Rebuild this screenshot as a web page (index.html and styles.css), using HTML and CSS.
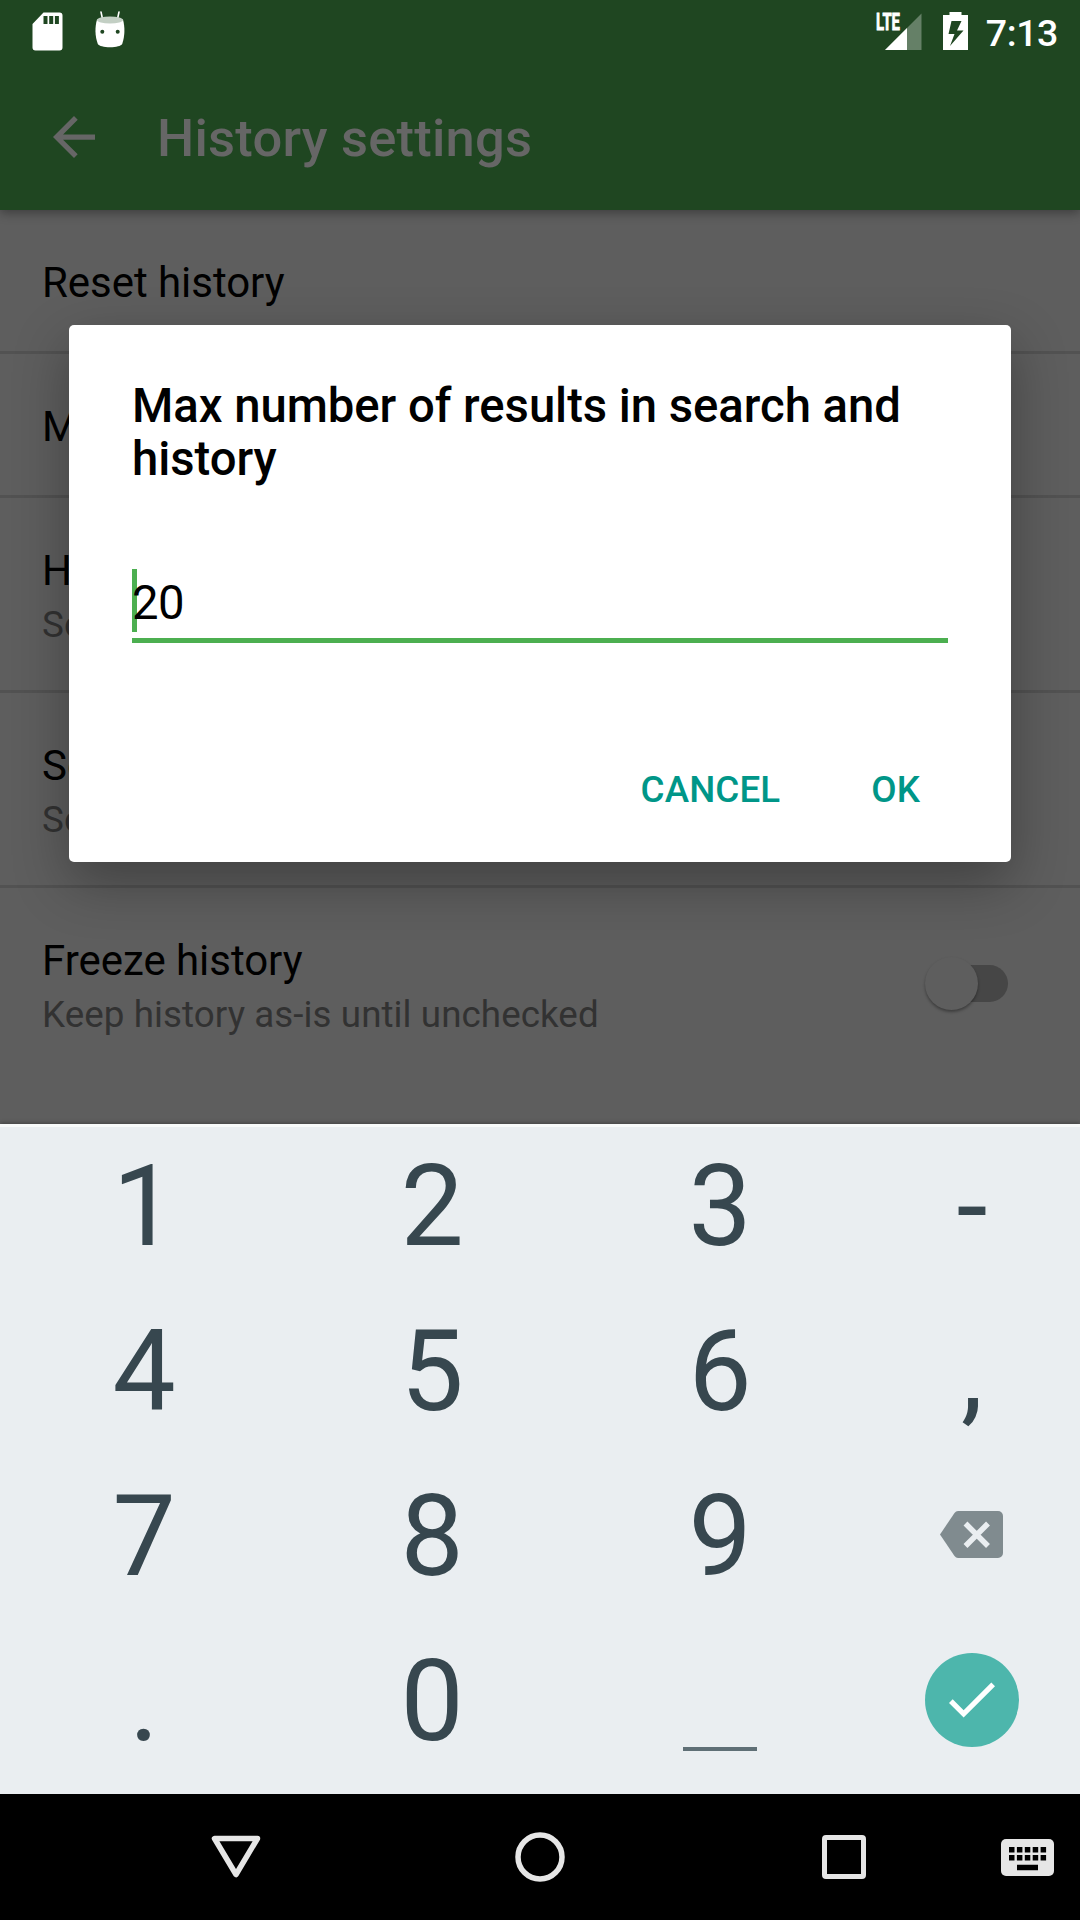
FILE: index.html
```html
<!DOCTYPE html>
<html lang="en">
<head>
<meta charset="utf-8">
<title>History settings</title>
<link rel="stylesheet" href="styles.css">
</head>
<body>
<div class="screen">
  <header class="top">
    <div class="status">
      <svg class="sd" width="31" height="39" viewBox="0 0 31 39"><path fill="#fff" fill-rule="evenodd" d="M11.500 .5H27.500a3 3 0 0 1 3 3v32a3 3 0 0 1-3 3h-24a3 3 0 0 1-3-3V12zM11.500 4v8h4v-8zM17.200 4v8h4v-8zM22.900 4v8h4v-8z"/></svg>
      <svg class="droid" width="32" height="37" viewBox="0 0 32 37"><path stroke="#fff" stroke-width="1.600" stroke-linecap="round" d="M7 1l1.500 7M25 1l-1.500 7"/><path fill="#fff" d="M3 8.500h26c2 8 2 16-.8 24.500-1.200 2-6 3.200-12.200 3.200S5 35 3.800 33C.8 24.500.8 16.500 3 8.500z"/><ellipse cx="16" cy="9" rx="13" ry="3.500" fill="#c3cfc4"/><circle cx="8.300" cy="20.700" r="2" fill="#1f4621"/><circle cx="23.700" cy="20.700" r="2" fill="#1f4621"/></svg>
      <svg class="signal" width="46" height="38" viewBox="0 0 46 38"><path fill="#658067" d="M45.500 .5v36.500H9z"/><path fill="#fff" d="M31 15v22H9z"/><text class="lte" x="0" y="16.500" textLength="24" lengthAdjust="spacingAndGlyphs">LTE</text></svg>
      <svg class="battery" width="25" height="38" viewBox="0 0 25 38"><path fill="#fff" fill-rule="evenodd" d="M6.500 0h12v3H25v35H0V3h6.500zM8.500 9L5.500 22h6L7 34 20.500 18.500H14L18.500 9z"/></svg>
      <span class="clock">7:13</span>
    </div>
    <div class="appbar">
      <svg width="42" height="42" viewBox="4 4 16 16"><path fill="#666" d="M20 11H7.830l5.590-5.590L12 4l-8 8 8 8 1.410-1.410L7.830 13H20v-2z"/></svg>
      <h1>History settings</h1>
    </div>
  </header>
  <main class="list">
    <div class="row"><p class="name">Reset history</p></div>
    <div class="row"><p class="name">M</p></div>
    <div class="row tall"><p class="name">H</p><p class="sub">So</p></div>
    <div class="row tall"><p class="name">Se</p><p class="sub">So</p></div>
    <div class="row last">
      <div><p class="name">Freeze history</p><p class="sub">Keep history as-is until unchecked</p></div>
      <div class="switch"><span class="thumb"></span></div>
    </div>
  </main>
  <section class="keyboard">
    <span>1</span><span>2</span><span>3</span><span>-</span>
    <span>4</span><span>5</span><span>6</span><span>,</span>
    <span>7</span><span>8</span><span>9</span>
    <span class="delete"><svg width="63" height="47" viewBox="0 0 63 47"><path fill="#808b8f" d="M18 0H58a5 5 0 0 1 5 5v37a5 5 0 0 1-5 5H18q-2 0-3.500-2L0 23.500 14.500 2Q16 0 18 0z"/><path stroke="#eaeef1" stroke-width="5.500" d="M25.500 12.500l22.500 22.500M48 12.500l-22.500 22.500"/></svg></span>
    <span>.</span><span>0</span><span><i class="space"></i></span>
    <span class="done"><svg width="46" height="36" viewBox="3.410 5.590 17.590 13.410"><path fill="#fff" d="M9 16.170L4.830 12l-1.420 1.410L9 19 21 7l-1.410-1.410z"/></svg></span>
  </section>
  <nav class="nav">
    <svg width="50" height="44" viewBox="0 0 50 44"><path fill="none" stroke="#e6e6e6" stroke-width="5.500" stroke-linejoin="round" d="M3.500 3.500h43L25 39.500z"/></svg>
    <svg width="50" height="50" viewBox="0 0 50 50"><circle cx="25" cy="25" r="22" fill="none" stroke="#e6e6e6" stroke-width="5.500"/></svg>
    <svg width="44" height="44" viewBox="0 0 44 44"><rect x="2.500" y="2.500" width="39" height="39" rx="1.500" fill="none" stroke="#e6e6e6" stroke-width="5"/></svg>
    <svg class="ime" width="53" height="37" viewBox="0 0 53 37"><rect width="53" height="37" rx="5" fill="#e6e6e6"/><path stroke="#000" stroke-width="5.500" stroke-dasharray="5.500 2.400" d="M8 10.700h37.200M8 18.700h37.200"/><path stroke="#000" stroke-width="5.500" d="M16 28.500h21"/></svg>
  </nav>
  <div class="dialog">
    <h2>Max number of results in search and history</h2>
    <div class="field"><i class="caret"></i>20</div>
    <div class="buttons"><button>CANCEL</button><button>OK</button></div>
  </div>
</div>
</body>
</html>
```
FILE: styles.css
```css
* { box-sizing: border-box; margin: 0; padding: 0; }
body { font-family: Roboto, sans-serif; background: #000; }
svg { display: block; flex: none; }
.screen { position: relative; width: 1080px; height: 1920px; overflow: hidden; display: flex; flex-direction: column; }
.top { height: 210px; background: #1f4621; flex: none; z-index: 1; box-shadow: 0 3px 10px rgba(0,0,0,.35); }
.status { height: 63px; display: flex; align-items: flex-start; padding: 12px 22px 0 32px; color: #fff; }
.droid { margin: -1px auto 0 31px; }
.signal { margin: 1px 21px 0 0; overflow: visible; }
.lte { font: 700 23px Roboto, sans-serif; fill: #fff; stroke: #fff; stroke-width: .8px; }
.clock { font-size: 37.5px; font-weight: 500; line-height: 42px; margin-left: 18px; letter-spacing: -.4px; }
.appbar { display: flex; align-items: center; height: 147px; padding-left: 53px; }
.appbar h1 { font-size: 52.5px; font-weight: 500; color: #666; margin-left: 62px; line-height: 62px; padding-top: 3px; letter-spacing: .23px; }
.list { height: 914px; flex: none; background: #5e5e5e; }
.row { height: 144px; padding: 48px 42px 0; border-bottom: 3px solid #525252; white-space: nowrap; }
.row.tall { height: 195px; }
.row.last { border: 0; display: flex; justify-content: space-between; height: 236px; padding-right: 72px; }
.name { font-size: 42px; line-height: 49px; color: #000; letter-spacing: -.04px; }
.sub { font-size: 36.75px; line-height: 43px; margin-top: 8px; color: #323232; letter-spacing: .07px; }
.switch { width: 76px; height: 37px; margin-top: 29px; border-radius: 19px; background: #464646; display: flex; align-items: center; }
.thumb { width: 53px; height: 53px; flex: none; border-radius: 50%; background: #5e5e5e; margin-left: -7px; box-shadow: 0 2px 3px rgba(0,0,0,.35); }
.keyboard { height: 670px; flex: none; background: #eaeef1; display: grid; grid-template-columns: 288px 288px 288px 216px; grid-template-rows: repeat(4, 165px); color: #37474f; font-size: 112.5px; line-height: 165px; box-shadow: inset 0 3px #f7f9f9, 0 -1px 4px rgba(0,0,0,.3); }
.keyboard span { display: flex; align-items: center; justify-content: center; }
.space { width: 74px; height: 4px; background: #5f6f76; margin-top: 95px; }
.keyboard .delete { padding: 0 1px 4px 0; }
.keyboard .done { width: 94px; height: 94px; border-radius: 50%; background: #4db6ac; place-self: center; margin-bottom: 3px; }
.nav { height: 126px; background: #000; display: flex; align-items: center; padding-left: 211px; }
.nav svg:nth-child(2) { margin: 0 257px 0 254px; }
.ime { margin-left: 135px; }
.dialog { position: absolute; left: 69px; top: 325px; width: 942px; height: 537px; background: #fff; border-radius: 5px; padding: 55px 63px 0; box-shadow: 0 20px 55px rgba(0,0,0,.32); }
.dialog h2 { font-size: 47.250px; font-weight: 500; line-height: 53.400px; color: #000; letter-spacing: -.035px; }
.field { position: relative; isolation: isolate; height: 78px; margin-top: 78.2px; border-bottom: 5px solid #4caf50; font-size: 47.250px; line-height: 77px; color: #000; letter-spacing: -.5px; }
.caret { position: absolute; left: 0; top: 4px; width: 5px; height: 63px; background: #4caf50; z-index: -1; }
.buttons { display: flex; justify-content: flex-end; gap: 91px; padding: 125px 28px 0 0; }
.buttons button { font: 500 36.750px/43px Roboto, sans-serif; letter-spacing: .1px; color: #009688; background: none; border: 0; }
```
